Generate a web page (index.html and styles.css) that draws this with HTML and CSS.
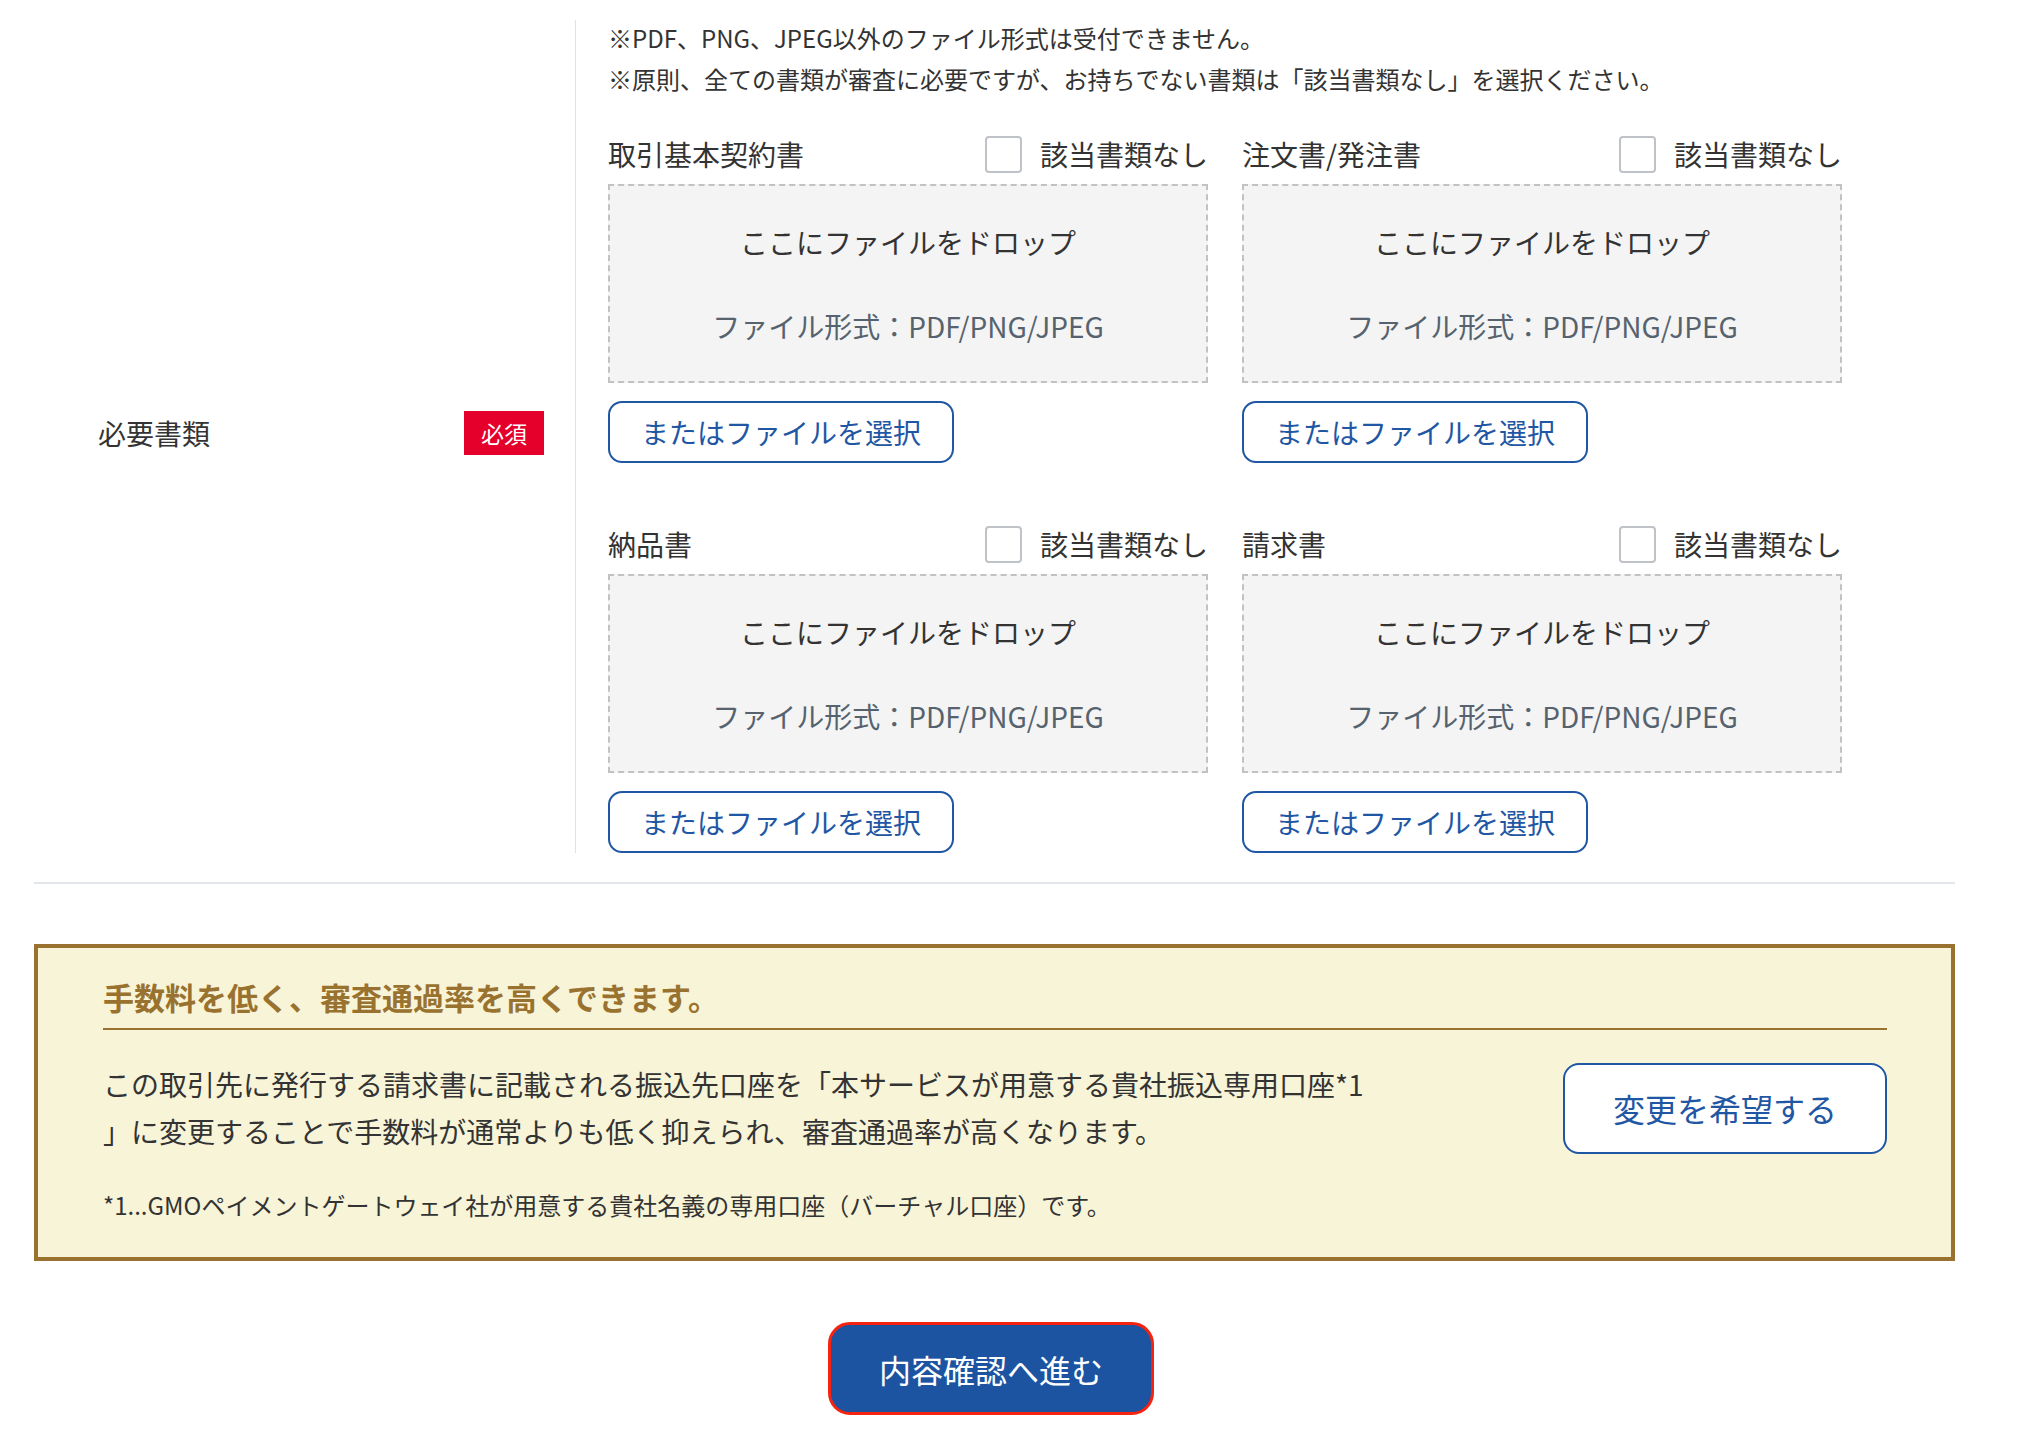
FILE: index.html
```html
<!DOCTYPE html>
<html lang="ja">
<head>
    <meta charset="UTF-8">
    <meta name="viewport" content="width=device-width, initial-scale=1.0">
    <title>必要書類のアップロード</title>
    <link rel="stylesheet" href="styles.css">
</head>
<body>
    <div class="page">
        <div class="form-row">
            <div class="form-label">
                <span>必要書類</span>
                <span class="badge">必須</span>
            </div>
            <div class="form-body">
                <p class="note">※PDF、PNG、JPEG以外のファイル形式は受付できません。<br>※原則、全ての書類が審査に必要ですが、お持ちでない書類は「該当書類なし」を選択ください。</p>

                <div class="doc-grid">
                    <div class="doc">
                        <div class="doc-head">
                            <span class="doc-title">取引基本契約書</span>
                            <label class="none-check"><span class="box"></span>該当書類なし</label>
                        </div>
                        <div class="drop">
                            <div class="drop-main">ここにファイルをドロップ</div>
                            <div class="drop-sub">ファイル形式：PDF/PNG/JPEG</div>
                        </div>
                        <button class="select-btn">またはファイルを選択</button>
                    </div>
                    <div class="doc">
                        <div class="doc-head">
                            <span class="doc-title">注文書/発注書</span>
                            <label class="none-check"><span class="box"></span>該当書類なし</label>
                        </div>
                        <div class="drop">
                            <div class="drop-main">ここにファイルをドロップ</div>
                            <div class="drop-sub">ファイル形式：PDF/PNG/JPEG</div>
                        </div>
                        <button class="select-btn">またはファイルを選択</button>
                    </div>
                    <div class="doc">
                        <div class="doc-head">
                            <span class="doc-title">納品書</span>
                            <label class="none-check"><span class="box"></span>該当書類なし</label>
                        </div>
                        <div class="drop">
                            <div class="drop-main">ここにファイルをドロップ</div>
                            <div class="drop-sub">ファイル形式：PDF/PNG/JPEG</div>
                        </div>
                        <button class="select-btn">またはファイルを選択</button>
                    </div>
                    <div class="doc">
                        <div class="doc-head">
                            <span class="doc-title">請求書</span>
                            <label class="none-check"><span class="box"></span>該当書類なし</label>
                        </div>
                        <div class="drop">
                            <div class="drop-main">ここにファイルをドロップ</div>
                            <div class="drop-sub">ファイル形式：PDF/PNG/JPEG</div>
                        </div>
                        <button class="select-btn">またはファイルを選択</button>
                    </div>
                </div>
            </div>
        </div>

        <div class="promo">
            <h2 class="promo-title">手数料を低く、審査通過率を高くできます。</h2>
            <div class="promo-row">
                <p class="promo-text">この取引先に発行する請求書に記載される振込先口座を「本サービスが用意する貴社振込専用口座*1<br>」に変更することで手数料が通常よりも低く抑えられ、審査通過率が高くなります。</p>
                <button class="change-btn">変更を希望する</button>
            </div>
            <p class="promo-note">*1...GMOペイメントゲートウェイ社が用意する貴社名義の専用口座（バーチャル口座）です。</p>
        </div>

        <div class="actions">
            <button class="submit-btn">内容確認へ進む</button>
        </div>
    </div>
</body>
</html>
```

FILE: styles.css
```css
body {
    margin: 0;
    background: #fff;
    color: #333;
    font-family: "Noto Sans CJK JP", "Noto Sans", sans-serif;
}
button {
    font-family: inherit;
    cursor: pointer;
}
.page {
    width: 1921px;
    margin-left: 34px;
    padding-top: 20px;
}

/* 必要書類 */
.form-row {
    display: flex;
    padding-bottom: 29px;
    border-bottom: 2px solid #e3e6ea;
}
.form-label {
    width: 541px;
    box-sizing: border-box;
    padding: 0 31px 8px 64px;
    display: flex;
    align-items: center;
    justify-content: space-between;
    font-size: 28px;
}
.badge {
    background-color: #e4002b;
    color: #fff;
    font-size: 23px;
    height: 44px;
    line-height: 44px;
    padding: 0 17px;
}
.form-body {
    border-left: 1px solid #e2e2e2;
    padding-left: 32px;
}
.note {
    margin: -3px 0 0;
    font-size: 24px;
    line-height: 41px;
}
.doc-grid {
    display: grid;
    grid-template-columns: 600px 600px;
    column-gap: 34px;
    row-gap: 63px;
    margin-top: 37px;
}
.doc-head {
    display: flex;
    align-items: center;
    justify-content: space-between;
    height: 36px;
    margin-bottom: 12px;
    font-size: 28px;
}
.none-check {
    display: flex;
    align-items: center;
    gap: 18px;
}
.none-check .box {
    width: 37px;
    height: 37px;
    box-sizing: border-box;
    border: 2px solid #bfc3c7;
    border-radius: 4px;
    background: #fff;
}
.drop {
    height: 199px;
    box-sizing: border-box;
    border: 2px dashed #c2c2c2;
    background-color: #f4f4f4;
    display: flex;
    flex-direction: column;
    align-items: center;
    justify-content: center;
    gap: 42px;
    font-size: 28px;
    line-height: 42px;
}
.drop-sub {
    color: #56636e;
}
.select-btn {
    margin-top: 18px;
    height: 62px;
    padding: 0 31px;
    border: 2px solid #1f57a4;
    border-radius: 14px;
    background: #fff;
    color: #1f57a4;
    font-size: 28px;
}

/* 振込専用口座の案内 */
.promo {
    margin-top: 60px;
    border: 4px solid #99722f;
    background-color: #f8f4d8;
    padding: 27px 64px 34px 65px;
}
.promo-title {
    margin: 0;
    font-size: 31px;
    line-height: 44px;
    color: #99722f;
    font-weight: bold;
    padding-bottom: 9px;
    border-bottom: 2px solid #99722f;
}
.promo-row {
    display: flex;
    align-items: center;
    justify-content: space-between;
    margin-top: 31px;
}
.promo-text {
    margin: 0;
    font-size: 28px;
    line-height: 47px;
}
.change-btn {
    width: 324px;
    height: 91px;
    border: 2px solid #1f57a4;
    border-radius: 16px;
    background: #fff;
    color: #1f57a4;
    font-size: 32px;
}
.promo-note {
    margin: 32px 0 0;
    font-size: 24px;
    line-height: 36px;
}

.actions {
    display: flex;
    justify-content: center;
    margin-top: 61px;
    padding-right: 7px;
}
.submit-btn {
    width: 326px;
    height: 93px;
    border: 3px solid #f5230f;
    border-radius: 22px;
    background-color: #1c54a2;
    color: #fff;
    font-size: 32px;
}
```
